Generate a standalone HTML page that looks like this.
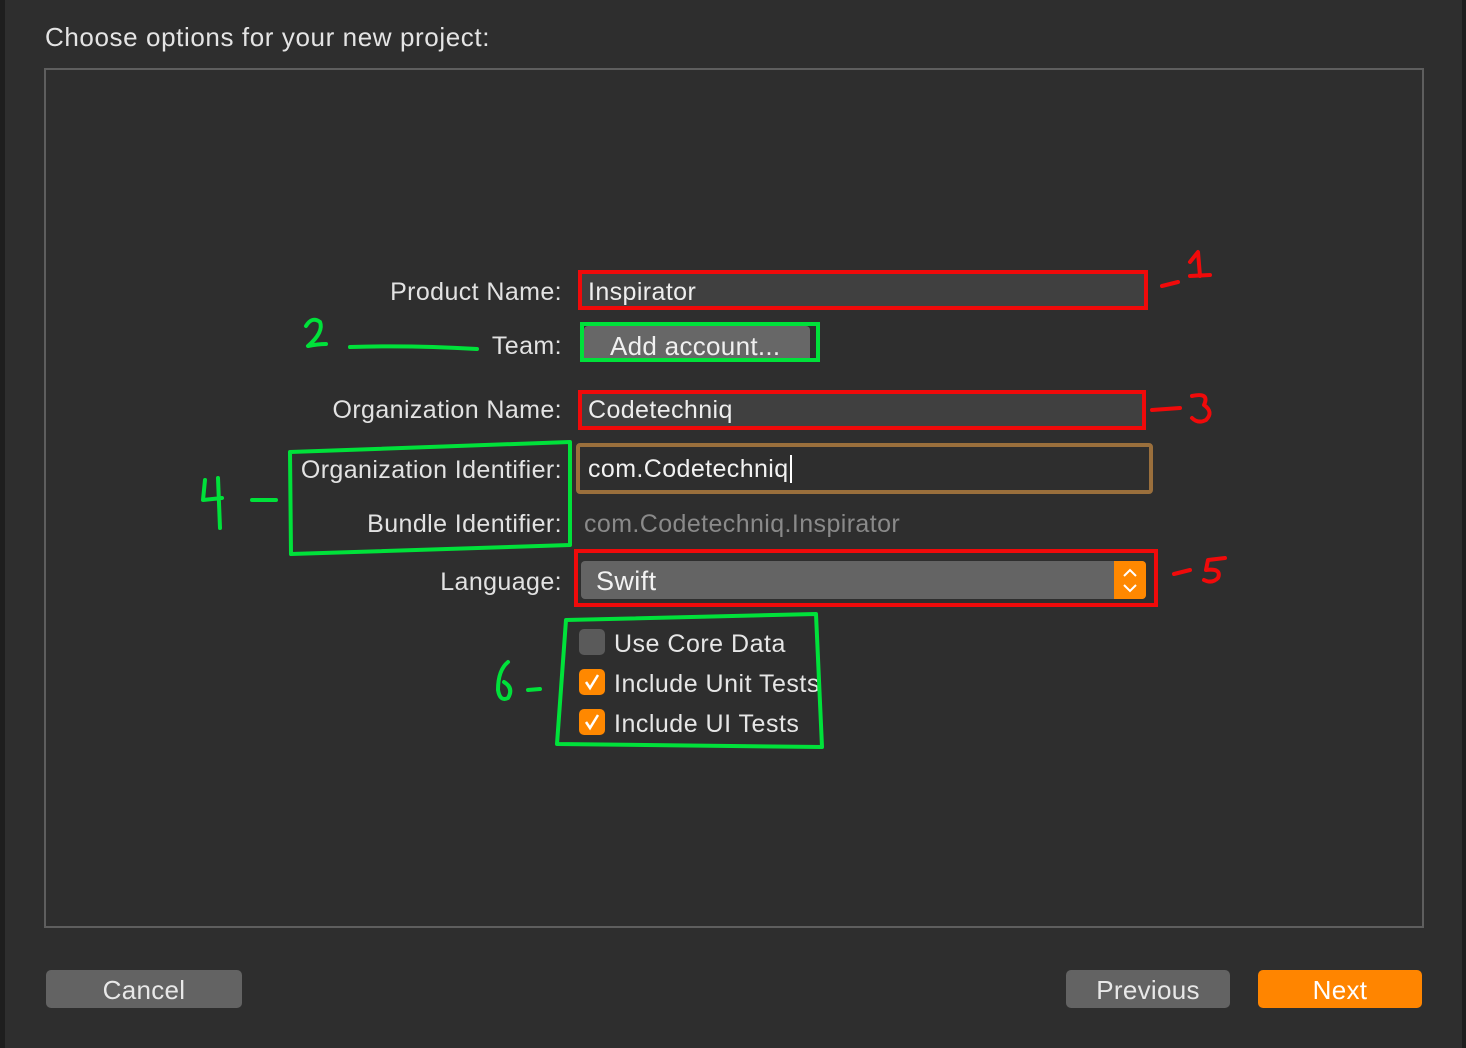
<!DOCTYPE html>
<html><head><meta charset="utf-8"><style>
*{margin:0;padding:0;box-sizing:border-box}
body{width:1466px;height:1048px;background:#2e2e2e;position:relative;overflow:hidden;font-family:"Liberation Sans",sans-serif;color:#e6e6e6}
.a{position:absolute}
.lbl{position:absolute;right:904px;font-size:25px;letter-spacing:0.4px;color:#e2e2e2;white-space:nowrap;line-height:28px}
.t{position:absolute;font-size:25px;letter-spacing:0.4px;line-height:28px;white-space:nowrap}
.btn{position:absolute;border-radius:5px;font-size:26px;letter-spacing:0.3px;text-align:center;color:#e8e8e8;line-height:40px}
</style></head><body>
<div class="a" style="left:0;top:0;width:5px;height:1048px;background:#1e1e1e"></div>
<div class="a" style="left:1462px;top:0;width:4px;height:1048px;background:#1e1e1e"></div>
<div class="t" style="left:45px;top:23px;font-size:26px;letter-spacing:0.6px;color:#e4e4e4">Choose options for your new project:</div>
<div class="a" style="left:44px;top:68px;width:1380px;height:860px;border:2px solid #5e5e5e"></div>

<div class="lbl" style="top:278px">Product Name:</div>
<div class="lbl" style="top:332px">Team:</div>
<div class="lbl" style="top:396px">Organization Name:</div>
<div class="lbl" style="top:456px">Organization Identifier:</div>
<div class="lbl" style="top:510px">Bundle Identifier:</div>
<div class="lbl" style="top:568px">Language:</div>

<div class="a" style="left:578px;top:270px;width:570px;height:40px;background:#404040;border:4px solid #f00a0a"></div>
<div class="t" style="left:588px;top:278px;color:#eee">Inspirator</div>

<div class="a" style="left:584px;top:326px;width:226px;height:36px;background:#676767;border-radius:4px"></div>
<div class="a" style="left:580px;top:322px;width:240px;height:40px;border:4px solid #00e13a"></div>
<div class="t" style="left:610px;top:332px;font-size:26px;letter-spacing:0.3px;color:#f0f0f0">Add account...</div>

<div class="a" style="left:578px;top:390px;width:568px;height:40px;background:#404040;border:4px solid #f00a0a"></div>
<div class="t" style="left:588px;top:396px;color:#eee">Codetechniq</div>

<div class="a" style="left:576px;top:443px;width:577px;height:51px;background:#2e2e2e;border:4px solid #9a6f3c;border-radius:4px"></div>
<div class="t" style="left:588px;top:455px;color:#f2f2f2">com.Codetechniq<span style="display:inline-block;width:2px;height:28px;background:#fff;vertical-align:top;margin-left:1px"></span></div>
<div class="t" style="left:584px;top:510px;color:#8a8a8a">com.Codetechniq.Inspirator</div>

<div class="a" style="left:574px;top:549px;width:584px;height:58px;border:4px solid #f00a0a"></div>
<div class="a" style="left:581px;top:561px;width:565px;height:38px;background:#646464;border-radius:4px"></div>
<div class="a" style="left:1114px;top:561px;width:32px;height:38px;background:#ff8800;border-radius:0 4px 4px 0"></div>
<svg class="a" style="left:1114px;top:561px" width="32" height="38"><path d="M10 15 L16 9 L22 15 M10 24 L16 30 L22 24" stroke="#fff" stroke-width="2" fill="none"/></svg>
<div class="t" style="left:596px;top:567px;font-size:27px;color:#f2f2f2">Swift</div>

<div class="a" style="left:579px;top:629px;width:26px;height:26px;background:#5a5a5a;border-radius:5px"></div>
<div class="a" style="left:579px;top:669px;width:26px;height:26px;background:#ff8800;border-radius:5px"></div>
<div class="a" style="left:579px;top:709px;width:26px;height:26px;background:#ff8800;border-radius:5px"></div>
<svg class="a" style="left:579px;top:669px" width="26" height="66"><path d="M7 13 L11 19 L19 6 M7 53 L11 59 L19 46" stroke="#fff" stroke-width="2.5" fill="none"/></svg>
<div class="t" style="left:614px;top:630px;font-size:25px;letter-spacing:0.5px">Use Core Data</div>
<div class="t" style="left:614px;top:670px;font-size:25px;letter-spacing:0.5px">Include Unit Tests</div>
<div class="t" style="left:614px;top:710px;font-size:25px;letter-spacing:0.5px">Include UI Tests</div>

<svg class="a" style="left:0;top:0" width="1466" height="1048" fill="none" stroke-linecap="round" stroke-linejoin="round" stroke-width="4">
<g stroke="#00e13a">
<path d="M290 452 L570 442 L570 545 L291 554 Z"/>
<path d="M566 620 L816 614 L822 747 L557 744 Z"/>
<path d="M350 347 Q410 345 477 349"/>
<path d="M306 326 Q312 316 320 322 Q324 332 308 346 Q318 344 326 344"/>
<path d="M205 480 L203 500 L222 498 M218 478 L220 528"/>
<path d="M252 500 L276 500"/>
<path d="M508 662 Q498 670 498 690 Q500 702 508 698 Q514 688 504 682"/>
<path d="M528 690 L540 689"/>
</g>
<g stroke="#f00a0a">
<path d="M1162 286 L1178 282"/>
<path d="M1190 262 L1198 252 L1200 276 M1190 276 L1210 275"/>
<path d="M1152 410 L1180 408"/>
<path d="M1192 396 Q1210 392 1204 405 Q1214 412 1206 420 Q1198 424 1192 418"/>
<path d="M1174 574 L1190 570"/>
<path d="M1225 558 L1208 560 L1206 570 Q1222 568 1218 578 Q1212 584 1204 580"/>
</g>
</svg>

<div class="btn" style="left:46px;top:970px;width:196px;height:38px;background:#636363">Cancel</div>
<div class="btn" style="left:1066px;top:970px;width:164px;height:38px;background:#636363">Previous</div>
<div class="btn" style="left:1258px;top:970px;width:164px;height:38px;background:#ff8500;color:#fff">Next</div>
</body></html>
